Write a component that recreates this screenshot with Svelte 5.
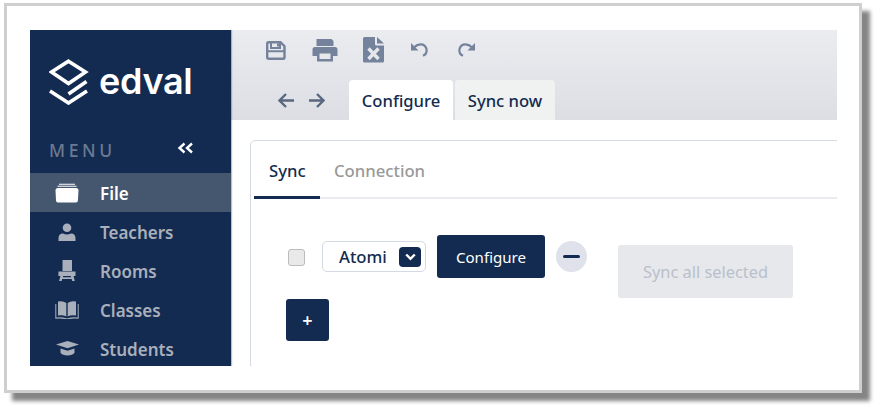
<script lang="ts">
  const menu = [
    { id: 'file', label: 'File', active: true },
    { id: 'teachers', label: 'Teachers' },
    { id: 'rooms', label: 'Rooms' },
    { id: 'classes', label: 'Classes' },
    { id: 'students', label: 'Students' },
  ]
</script>

<div class="page">
  <div class="frame">
    <div class="app">
      <aside class="side">
        <div class="logo">
          <svg class="mark" width="40" height="46" viewBox="0 0 40 46" fill="none" stroke="#fff" stroke-width="3.6">
            <path d="M19.500 2.200 36.500 13 19.500 24.500 2.500 13Z" />
            <path d="M19.500 35 37.500 22.500" />
            <path d="M1 32 19.500 44 38 32" />
          </svg>
          <span class="word">edval</span>
        </div>
        <div class="menuhead">
          <span class="menulabel">MENU</span>
          <span class="collapse">
            <svg width="17" height="12" viewBox="0 0 17 12" fill="none" stroke="#fff" stroke-width="2.400">
              <path d="M7.500 1.500 2.500 6l5 4.500M15 1.500 10 6l5 4.500" />
            </svg>
          </span>
        </div>
        <nav class="nav">
          {#each menu as m}
            <div class="item" class:active={m.active}>
              <span class="ico">
                {#if m.id === 'file'}
                  <svg width="24" height="20" viewBox="0 0 24 20" fill="#fff">
                    <path d="M4 .8h16v1H4zM2.500 2.700h19v1h-19z" />
                    <path d="M.5 7.500Q.5 5 3 5h18q2.500 0 2.500 2.500l-.6 10q0 2-2 2H3q-2 0-2-2z" />
                  </svg>
                {:else if m.id === 'teachers'}
                  <svg width="18" height="18" viewBox="0 0 18 18" fill="#a9afbb">
                    <circle cx="9" cy="4.700" r="4.300" />
                    <path d="M.5 18v-2.500Q.5 10.500 5 10.500q2 1 4 1t4-1q4.500 0 4.500 5V18z" />
                  </svg>
                {:else if m.id === 'rooms'}
                  <svg width="18" height="21" viewBox="0 0 18 21" fill="#a9afbb">
                    <path d="M4.500 0h9.500v11H4.500z" />
                    <path d="M.5 11.500h17v4.500h-2l1.300 5h-2.600l-.5-2H4.200l-.5 2H1.100l1.300-5h-2zM5.200 16l-.4 1.300h8.400L12.800 16z" fill-rule="evenodd" />
                  </svg>
                {:else if m.id === 'classes'}
                  <svg width="24" height="18" viewBox="0 0 24 18" fill="#a9afbb">
                    <path d="M3 .5q5-1 8.300 1.500v13.500Q8 13.500 3 14.500zM21 .5q-5-1-8.300 1.500v13.500q3.300-2 8.300-1z" />
                    <path d="M1.300 3v13.500q6-.8 9.700.8h2q3.700-1.600 9.700-.8V3h1v14.800q-6-1-10.300.5h-2.800Q6 16.800.3 17.800V3z" />
                  </svg>
                {:else}
                  <svg width="23" height="15" viewBox="0 0 23 15" fill="#a9afbb">
                    <path d="M11.500 0 23 3.500 11.500 7.200 0 3.500z" />
                    <path d="M4.500 7.500l7 2.200 7-2.200v4.300q-2 2.700-7 2.700t-7-2.700z" />
                  </svg>
                {/if}
              </span>
              <span class="name">{m.label}</span>
            </div>
          {/each}
        </nav>
      </aside>

      <main class="main">
        <div class="toolbar">
          <div class="tools">
            <svg class="t-save" width="20" height="19" viewBox="0 0 20 19" fill="none" stroke="#74829b" stroke-width="2.400">
              <path d="M2.500 1.200h12l4 4v11q0 1.600-1.600 1.600H2.800q-1.600 0-1.600-1.600V2.800q0-1.600 1.300-1.600z" />
              <path d="M5 1.500v5.500h9V1.500M2 10.300h16" stroke-width="2" />
              <path d="M11 2.500h2v3h-2z" fill="#74829b" stroke="none" />
            </svg>
            <svg class="t-print" width="26" height="24" viewBox="0 0 26 24" fill="#74829b">
              <path d="M4.500 1h15l2 2v5h-17z" />
              <path d="M3 9h20q2.500 0 2.500 2.500V18H21v5.500H5V18H.5v-6.500Q.5 9 3 9zM7.500 15.500v5.500h11v-5.500z" fill-rule="evenodd" />
            </svg>
            <svg class="t-excel" width="21" height="26" viewBox="0 0 21 26" fill="#74829b">
              <path d="M1.500 0H12v7q0 1.500 1.500 1.500H21V24q0 1.500-1.500 1.500h-18Q0 25.500 0 24V1.500Q0 0 1.500 0zM14 0l7 6.500h-7z" />
              <path d="M5.500 11.500 15.500 22M15.500 11.500 5.500 22" fill="none" stroke="#e6e7eb" stroke-width="3.400" />
            </svg>
            <svg class="t-undo" width="20" height="16" viewBox="0 0 20 16" fill="none">
              <path d="M4.200 5.200Q7 2.300 10.500 2.300a6 6 0 0 1 2.500 11.500" stroke="#74829b" stroke-width="2.200" />
              <path d="M1 1v7.500h7.500z" fill="#74829b" />
            </svg>
            <svg class="t-redo" width="20" height="16" viewBox="0 0 20 16" fill="none">
              <path d="M15.800 5.200Q13 2.300 9.500 2.300a6 6 0 0 0-2.500 11.500" stroke="#74829b" stroke-width="2.200" />
              <path d="M19 1v7.500h-7.500z" fill="#74829b" />
            </svg>
          </div>
          <div class="lower">
            <div class="arrows">
              <svg width="16" height="15" viewBox="0 0 16 15" fill="none" stroke="#59687f" stroke-width="2.400">
                <path d="M16 7.500H2M8 1 1.500 7.500 8 14" />
              </svg>
              <svg width="16" height="15" viewBox="0 0 16 15" fill="none" stroke="#59687f" stroke-width="2.400">
                <path d="M0 7.500h14M8 1l6.500 6.500L8 14" />
              </svg>
            </div>
            <div class="toptab on">Configure</div>
            <div class="toptab">Sync now</div>
          </div>
        </div>

        <div class="body">
          <section class="panel">
            <div class="tabs">
              <div class="tab on">Sync</div>
              <div class="tab">Connection</div>
            </div>
            <div class="content">
              <div class="row">
                <span class="check"></span>
                <div class="select">
                  <span>Atomi</span>
                  <span class="chev">
                    <svg width="11" height="8" viewBox="0 0 11 8" fill="none" stroke="#fff" stroke-width="2.400">
                      <path d="M1.200 1.500 5.500 5.800 9.800 1.500" />
                    </svg>
                  </span>
                </div>
                <button class="btn conf">Configure</button>
                <span class="minus"><span class="bar"></span></span>
                <button class="syncall">Sync all selected</button>
              </div>
              <button class="btn plus">+</button>
            </div>
          </section>
        </div>
      </main>
    </div>
  </div>
</div>

<style>
  :global(body) {
    margin: 0;
    background: #fff;
    font-family: 'Noto Sans', sans-serif;
  }

  .page {
    width: 886px;
    height: 413px;
    padding: 3px 0 0 4px;
    box-sizing: border-box;
    overflow: hidden;
  }

  .frame {
    box-sizing: border-box;
    width: 858px;
    height: 390px;
    padding: 24px 23px;
    border: 3px solid #cfcfcf;
    background: #fff;
    box-shadow: 8px 8px 4px #858585;
  }

  .app {
    display: flex;
    width: 807px;
    height: 336px;
    overflow: hidden;
  }

  .side {
    flex: none;
    width: 201px;
    background: #132b50;
    box-shadow: 1px 0 1px rgba(0, 0, 0, 0.25);
    position: relative;
  }

  .logo {
    box-sizing: border-box;
    display: flex;
    align-items: center;
    height: 100px;
    padding: 3px 0 0 19px;
    gap: 10px;
  }
  .word {
    color: #fff;
    font-family: Inter, sans-serif;
    font-weight: 600;
    font-size: 36px;
    letter-spacing: -0.3px;
    line-height: 1;
    margin-top: -2px;
  }

  .menuhead {
    box-sizing: border-box;
    display: flex;
    align-items: center;
    justify-content: space-between;
    height: 43px;
    padding: 0 37px 3px 19px;
  }
  .menulabel {
    color: #6b7a92;
    font-size: 17.500px;
    letter-spacing: 3.600px;
    font-weight: 500;
  }
  .collapse {
    display: flex;
    margin-top: -4px;
  }

  .item {
    display: flex;
    align-items: center;
    height: 39px;
    color: #a9afbb;
    font-size: 17px;
    font-weight: 600;
  }
  .item.active {
    background: #45566f;
    color: #fff;
  }
  .name {
    padding-top: 2px;
  }
  .ico {
    flex: none;
    width: 70px;
    display: flex;
    justify-content: center;
    padding-left: 4px;
    box-sizing: border-box;
  }

  .main {
    flex: 1;
    min-width: 0;
  }

  .toolbar {
    height: 90px;
    background: linear-gradient(180deg, #ebecf0, #dcdee4);
  }
  .tools {
    display: flex;
    align-items: center;
    height: 40px;
    padding-left: 35px;
  }
  .t-print {
    margin-left: 26px;
  }
  .t-excel {
    margin-left: 25px;
  }
  .t-undo,
  .t-redo {
    margin-left: 26px;
  }
  .lower {
    display: flex;
    align-items: flex-end;
    height: 50px;
  }
  .arrows {
    display: flex;
    align-items: center;
    gap: 15px;
    width: 118px;
    height: 40px;
    padding-left: 47px;
    box-sizing: border-box;
  }
  .toptab {
    box-sizing: border-box;
    display: flex;
    align-items: center;
    justify-content: center;
    width: 100px;
    height: 40px;
    margin-left: 2px;
    border-radius: 4px 4px 0 0;
    background: #f0f2f2;
    color: #132b50;
    font-size: 16.600px;
    font-weight: 500;
  }
  .toptab.on {
    width: 104px;
    margin-left: 0;
    background: #fff;
  }

  .body {
    padding: 20px 0 0 19px;
  }
  .panel {
    box-sizing: border-box;
    width: 620px;
    height: 260px;
    border: 1px solid #d5d9e3;
    border-radius: 5px;
    padding: 0 3px;
  }
  .tabs {
    display: flex;
    height: 58px;
    border-bottom: 2px solid #e9ebef;
    box-sizing: border-box;
  }
  .tab {
    box-sizing: border-box;
    height: 58px;
    padding: 0 14px;
    line-height: 60px;
    color: #999;
    font-size: 16.700px;
    font-weight: 500;
  }
  .tab.on {
    width: 66px;
    padding-left: 15px;
    color: #132b50;
    border-bottom: 3px solid #132b50;
  }

  .content {
    padding: 36px 0 0 32px;
  }
  .row {
    display: flex;
    align-items: flex-start;
  }
  .check {
    box-sizing: border-box;
    width: 17px;
    height: 17px;
    margin: 14px 0 0 2px;
    background: #e9e9e9;
    border: 1px solid #bcbcbc;
    border-radius: 3px;
  }
  .select {
    box-sizing: border-box;
    display: flex;
    align-items: center;
    justify-content: space-between;
    width: 104px;
    height: 31px;
    margin: 6px 0 0 17px;
    padding: 0 4px 0 16px;
    border: 1px solid #d5d9e3;
    border-radius: 5px;
    color: #132b50;
    font-size: 16.700px;
    font-weight: 500;
  }
  .chev {
    display: flex;
    align-items: center;
    justify-content: center;
    width: 22px;
    height: 20px;
    background: #132b50;
    border-radius: 4px;
  }
  .btn {
    border: none;
    background: #132b50;
    color: #fff;
    border-radius: 3px;
    font-family: inherit;
    padding: 0;
  }
  .conf {
    width: 108px;
    height: 43px;
    margin-left: 11px;
    font-size: 15.100px;
  }
  .minus {
    display: flex;
    align-items: center;
    justify-content: center;
    width: 31px;
    height: 31px;
    margin: 6px 0 0 11px;
    border-radius: 50%;
    background: #dfe2ea;
  }
  .bar {
    width: 17px;
    height: 3.500px;
    border-radius: 2px;
    background: #132b50;
  }
  .syncall {
    width: 175px;
    height: 53px;
    margin: 10px 0 0 31px;
    border: none;
    border-radius: 3px;
    background: #e6e8ec;
    color: #b9c0cb;
    font-family: inherit;
    font-size: 16.400px;
    padding: 0;
  }
  .plus {
    display: block;
    width: 43px;
    height: 42px;
    margin-top: 1px;
    font-size: 18px;
    font-weight: 600;
  }
</style>
